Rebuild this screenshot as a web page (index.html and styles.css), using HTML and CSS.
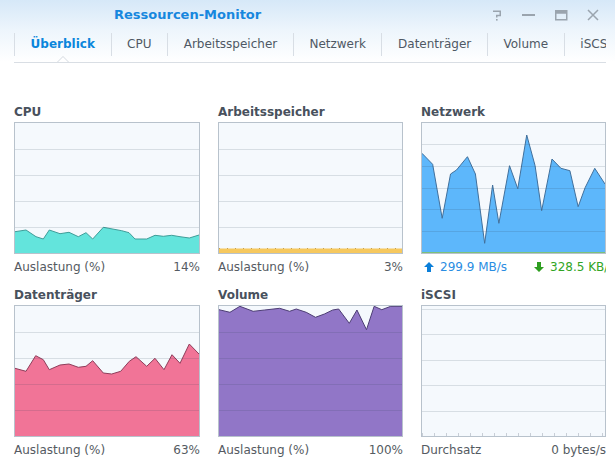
FILE: index.html
```html
<!DOCTYPE html>
<html lang="de">
<head>
<meta charset="utf-8">
<title>Ressourcen-Monitor</title>
<link rel="stylesheet" href="styles.css">
</head>
<body>
<div class="window">
  <header class="titlebar">
    <div class="app-title">Ressourcen-Monitor</div>
    <div class="controls">
      <span class="ctl"><svg width="10" height="11" viewBox="0 0 10 11"><path d="M1 1.25 H8.25 V5.5 H4.75 V7.6" fill="none" stroke="#9aa4ae" stroke-width="1.5"/><rect x="4" y="9" width="1.6" height="1.6" fill="#9aa4ae"/></svg></span>
      <span class="ctl"><svg width="14" height="4" viewBox="0 0 14 4"><rect x="0" y="1" width="13" height="2" fill="#9aa4ae"/></svg></span>
      <span class="ctl"><svg width="13" height="11" viewBox="0 0 13 11"><rect x="0.75" y="0.75" width="11" height="9" fill="none" stroke="#9aa4ae" stroke-width="1.5"/><rect x="0.75" y="0.75" width="11" height="3" fill="#9aa4ae"/></svg></span>
      <span class="ctl"><svg width="12" height="12" viewBox="0 0 12 12"><path d="M1 1 L11 11 M11 1 L1 11" stroke="#9aa4ae" stroke-width="1.5"/></svg></span>
    </div>
  </header>

  <nav class="tabs">
    <div class="tab active">Überblick</div>
    <div class="tab">CPU</div>
    <div class="tab">Arbeitsspeicher</div>
    <div class="tab">Netzwerk</div>
    <div class="tab">Datenträger</div>
    <div class="tab">Volume</div>
    <div class="tab">iSCSI</div>
  </nav>

  <main class="grid">
    <section class="card">
      <h2 class="card-title">CPU</h2>
      <div class="chart">
        <svg viewBox="0 0 184 130" preserveAspectRatio="none">
          <path class="cpu-fill" d="M0,130 L0,108.7 11,107 21,113.7 28.3,116 34.3,107 45,110.7 54,109.3 63.3,113.7 71,109.7 77.7,116 88.3,104.3 106.7,107.7 114,109.7 120,116 131.7,116 140,112.3 148.3,113.3 156.7,112.3 165,113.7 174.3,115 184,112 L184,130 Z"/>
          <polyline class="cpu-line" points="0,108.7 11,107 21,113.7 28.3,116 34.3,107 45,110.7 54,109.3 63.3,113.7 71,109.7 77.7,116 88.3,104.3 106.7,107.7 114,109.7 120,116 131.7,116 140,112.3 148.3,113.3 156.7,112.3 165,113.7 174.3,115 184,112"/>
          <g class="gridlines"><line x1="0" y1="26.5" x2="184" y2="26.5"/><line x1="0" y1="52.5" x2="184" y2="52.5"/><line x1="0" y1="78.5" x2="184" y2="78.5"/><line x1="0" y1="104.5" x2="184" y2="104.5"/></g>
        </svg>
      </div>
      <div class="card-foot"><span>Auslastung (%)</span><span>14%</span></div>
    </section>

    <section class="card">
      <h2 class="card-title">Arbeitsspeicher</h2>
      <div class="chart">
        <svg viewBox="0 0 184 130" preserveAspectRatio="none">
          <g class="gridlines"><line x1="0" y1="26.5" x2="184" y2="26.5"/><line x1="0" y1="52.5" x2="184" y2="52.5"/><line x1="0" y1="78.5" x2="184" y2="78.5"/><line x1="0" y1="104.5" x2="184" y2="104.5"/></g>
          <rect class="mem-fill" x="0" y="125.5" width="184" height="4.5"/>
          <line class="mem-line" x1="0" y1="125.5" x2="184" y2="125.5"/>
        </svg>
      </div>
      <div class="card-foot"><span>Auslastung (%)</span><span>3%</span></div>
    </section>

    <section class="card">
      <h2 class="card-title">Netzwerk</h2>
      <div class="chart">
        <svg viewBox="0 0 184 130" preserveAspectRatio="none">
          <path class="net-fill" d="M0,130 L0,30.3 10.7,41.3 20.3,95.3 28.7,51 34.7,47 45.7,33.7 53.7,51 63,120.3 71,62 77.3,100.3 88,42.7 96.3,65.7 105.3,12 113.7,42.7 120.3,87.7 130.7,36 139.7,45.3 148.7,47.7 157,83.7 164,64.7 173.7,45.3 184,61 L184,130 Z"/>
          <polyline class="net-line" points="0,30.3 10.7,41.3 20.3,95.3 28.7,51 34.7,47 45.7,33.7 53.7,51 63,120.3 71,62 77.3,100.3 88,42.7 96.3,65.7 105.3,12 113.7,42.7 120.3,87.7 130.7,36 139.7,45.3 148.7,47.7 157,83.7 164,64.7 173.7,45.3 184,61"/>
          <g class="gridlines"><line x1="0" y1="21.5" x2="184" y2="21.5"/><line x1="0" y1="43.5" x2="184" y2="43.5"/><line x1="0" y1="65.5" x2="184" y2="65.5"/><line x1="0" y1="86.5" x2="184" y2="86.5"/><line x1="0" y1="108.5" x2="184" y2="108.5"/></g>
          <line class="net-down" x1="0" y1="129.5" x2="184" y2="129.5"/>
        </svg>
      </div>
      <div class="card-foot net-foot">
        <span class="rate up"><svg width="10" height="10" viewBox="0 0 10 10"><polygon points="5,0 10,5 7,5 7,10 3,10 3,5 0,5" fill="#0b7fd9"/></svg>299.9 MB/s</span>
        <span class="rate down"><svg width="10" height="10" viewBox="0 0 10 10"><polygon points="3,0 7,0 7,5 10,5 5,10 0,5 3,5" fill="#2e9e20"/></svg>328.5 KB/s</span>
      </div>
    </section>

    <section class="card">
      <h2 class="card-title">Datenträger</h2>
      <div class="chart">
        <svg viewBox="0 0 184 130" preserveAspectRatio="none">
          <path class="disk-fill" d="M0,130 L0,62.3 11,65.3 20.7,49.7 28.3,53.7 34.3,63.7 45,59 54,58 63.3,61.3 71,60.3 77.7,54.7 88.3,67 96.7,68 105.7,65.3 114.3,55.3 121,50.7 131.7,60.3 140,52.3 149,63.7 157,48.7 165,57.3 174.3,38 184,48 L184,130 Z"/>
          <polyline class="disk-line" points="0,62.3 11,65.3 20.7,49.7 28.3,53.7 34.3,63.7 45,59 54,58 63.3,61.3 71,60.3 77.7,54.7 88.3,67 96.7,68 105.7,65.3 114.3,55.3 121,50.7 131.7,60.3 140,52.3 149,63.7 157,48.7 165,57.3 174.3,38 184,48"/>
          <g class="gridlines"><line x1="0" y1="26.5" x2="184" y2="26.5"/><line x1="0" y1="52.5" x2="184" y2="52.5"/><line x1="0" y1="78.5" x2="184" y2="78.5"/><line x1="0" y1="104.5" x2="184" y2="104.5"/></g>
        </svg>
      </div>
      <div class="card-foot"><span>Auslastung (%)</span><span>63%</span></div>
    </section>

    <section class="card">
      <h2 class="card-title">Volume</h2>
      <div class="chart">
        <svg viewBox="0 0 184 130" preserveAspectRatio="none">
          <path class="vol-fill" d="M0,130 L0,3.7 11,6.3 21,0.3 34.3,5.3 46,4 61,2.3 71,5.3 77.7,3 87.7,6.3 97,11.3 106,8 114.3,4 120.3,3 131,17.3 138.7,4 148.3,23.7 156,0.3 163.7,3.7 172.7,0.3 184,0.3 L184,130 Z"/>
          <polyline class="vol-line" points="0,3.7 11,6.3 21,0.3 34.3,5.3 46,4 61,2.3 71,5.3 77.7,3 87.7,6.3 97,11.3 106,8 114.3,4 120.3,3 131,17.3 138.7,4 148.3,23.7 156,0.3 163.7,3.7 172.7,0.3 184,0.3"/>
          <g class="gridlines"><line x1="0" y1="26.5" x2="184" y2="26.5"/><line x1="0" y1="52.5" x2="184" y2="52.5"/><line x1="0" y1="78.5" x2="184" y2="78.5"/><line x1="0" y1="104.5" x2="184" y2="104.5"/></g>
        </svg>
      </div>
      <div class="card-foot"><span>Auslastung (%)</span><span>100%</span></div>
    </section>

    <section class="card">
      <h2 class="card-title">iSCSI</h2>
      <div class="chart">
        <svg viewBox="0 0 184 130" preserveAspectRatio="none">
          <g class="gridlines"><line x1="0" y1="3.5" x2="184" y2="3.5"/><line x1="0" y1="28.5" x2="184" y2="28.5"/><line x1="0" y1="54.5" x2="184" y2="54.5"/><line x1="0" y1="79.5" x2="184" y2="79.5"/><line x1="0" y1="105.5" x2="184" y2="105.5"/></g>
          <line class="ticks" x1="0" y1="128.5" x2="184" y2="128.5"/>
        </svg>
      </div>
      <div class="card-foot"><span>Durchsatz</span><span>0 bytes/s</span></div>
    </section>
  </main>
</div>
</body>
</html>
```

FILE: styles.css
```css
html, body {
  margin: 0;
  padding: 0;
  background: #ffffff;
}

body {
  width: 615px;
  height: 470px;
  overflow: hidden;
  font-family: "DejaVu Sans", Verdana, sans-serif;
  font-size: 12px;
  color: #555b62;
}

.window {
  width: 615px;
  height: 470px;
  background: linear-gradient(to bottom, #d6e8f8 0px, #edf5fc 30px, #ffffff 62px);
}

.titlebar {
  display: flex;
  align-items: center;
  height: 30px;
}

.app-title {
  padding-left: 114px;
  font-weight: bold;
  font-size: 13px;
  color: #1787de;
  line-height: 16px;
}

.controls {
  margin-left: auto;
  margin-right: 6px;
  display: flex;
}

.ctl {
  width: 32px;
  height: 20px;
  display: flex;
  align-items: center;
  justify-content: center;
}

.ctl svg {
  display: block;
}

.tabs {
  display: flex;
  margin-left: 14px;
  width: 592px;
  overflow: hidden;
  padding-top: 3px;
  padding-bottom: 6px;
  border-bottom: 1px solid #d9dee4;
  white-space: nowrap;
}

.tab {
  position: relative;
  flex: none;
  height: 23px;
  line-height: 23px;
  padding: 0 15.6px;
  border-left: 1px solid #d8dee5;
  color: #4f5864;
}

.tab.active {
  font-weight: bold;
  color: #0a86dc;
}

.tab.active::before,
.tab.active::after {
  content: "";
  position: absolute;
  left: 50%;
  width: 0;
  height: 0;
  border-style: solid;
  border-color: transparent;
}

.tab.active::before {
  bottom: -7px;
  margin-left: -7px;
  border-width: 0 7px 7px 7px;
  border-bottom-color: #d3d9e0;
}

.tab.active::after {
  bottom: -7px;
  margin-left: -6px;
  border-width: 0 6px 6px 6px;
  border-bottom-color: #ffffff;
}

.grid {
  display: grid;
  grid-template-columns: 186px 185px 185px;
  column-gap: 18px;
  row-gap: 14px;
  padding: 42px 0 0 14px;
  width: 592px;
  overflow: hidden;
}

.card {
  min-width: 0;
}

.card-title {
  margin: 0 0 3px 0;
  font-size: 12px;
  line-height: 14px;
  font-weight: bold;
  color: #48515d;
}

.chart {
  height: 132px;
  box-sizing: border-box;
  border: 1px solid #b8c2cc;
  background: #f5f9fd;
}

.chart svg {
  display: block;
  width: 100%;
  height: 130px;
}

.gridlines line {
  stroke: rgba(50, 70, 90, 0.15);
  stroke-width: 1;
  vector-effect: non-scaling-stroke;
}

.cpu-fill { fill: #63e4dc; }
.cpu-line { fill: none; stroke: #3f9d99; stroke-width: 1; vector-effect: non-scaling-stroke; }

.mem-fill { fill: #f6c85e; }
.mem-line { stroke: #c9a24a; stroke-width: 1; stroke-dasharray: 1 7; vector-effect: non-scaling-stroke; }

.net-fill { fill: #5db7fb; }
.net-line { fill: none; stroke: #41709c; stroke-width: 1; vector-effect: non-scaling-stroke; }
.net-down { stroke: #7cc07a; stroke-width: 1; vector-effect: non-scaling-stroke; }

.disk-fill { fill: #f17497; }
.disk-line { fill: none; stroke: #8e3d5a; stroke-width: 1; vector-effect: non-scaling-stroke; }

.vol-fill { fill: #9176c7; }
.vol-line { fill: none; stroke: #4d3e74; stroke-width: 1; vector-effect: non-scaling-stroke; }

.ticks { stroke: #c8ced6; stroke-width: 3; stroke-dasharray: 1 11; vector-effect: non-scaling-stroke; }

.card-foot {
  display: flex;
  justify-content: space-between;
  margin-top: 6px;
  line-height: 14px;
  font-size: 12px;
  color: #555b62;
  white-space: nowrap;
}

.net-foot {
  justify-content: flex-start;
}

.rate {
  display: flex;
  align-items: center;
  gap: 6px;
  flex: none;
}

.rate svg {
  display: block;
}

.rate.up {
  width: 113px;
  padding-left: 3px;
  box-sizing: border-box;
  color: #2a8de2;
}

.rate.down {
  color: #31a524;
}
```
